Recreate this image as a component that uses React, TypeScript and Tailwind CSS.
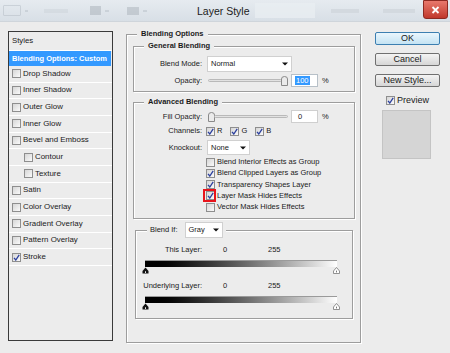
import React from "react"

// Photoshop "Layer Style" dialog

function Check({ checked = false }: { checked?: boolean }) {
  return (
    <span className="w-[9px] h-[9px] shrink-0 border border-[#8e8e8e] bg-linear-to-br from-[#d6d6d6] to-[#fafafa] flex items-center justify-center">
      {checked && (
        <svg width="7" height="7" viewBox="0 0 7 7">
          <path d="M1 3.8 L2.8 6 L6.2 0.8" stroke="#2b3f9e" strokeWidth="1.3" fill="none" />
        </svg>
      )}
    </span>
  )
}

function Arrow() {
  return (
    <svg width="6" height="4" viewBox="0 0 6 4">
      <path d="M0 0.5 H6 L3 3.5Z" fill="#111" />
    </svg>
  )
}

function Thumb() {
  return (
    <svg width="7" height="10" viewBox="0 0 7 10" className="shrink-0">
      <path d="M0.5 3 Q0.5 0.5 3.5 0.5 Q6.5 0.5 6.5 3 V9.5 H0.5Z" fill="#ebebeb" stroke="#8a8a8a" />
    </svg>
  )
}

function Track() {
  return <div className="flex-1 h-[3px] rounded-full border border-[#b9b9b9] bg-[#e2e2e2]" />
}

function Select({ value, w }: { value: string; w: string }) {
  return (
    <div className={`${w} h-full bg-white border border-[#d0d0d0] flex items-center justify-between pl-[3px] pr-[3px]`}>
      <span>{value}</span>
      <Arrow />
    </div>
  )
}

function BlackTri() {
  return (
    <svg width="7" height="7" viewBox="0 0 7 7">
      <path d="M3.5 0.5 L6.5 4 V6.5 H0.5 V4Z" fill="#111" />
      <rect x="3" y="4.3" width="1" height="1.6" fill="#fff" />
    </svg>
  )
}

function WhiteTri() {
  return (
    <svg width="7" height="7" viewBox="0 0 7 7">
      <path d="M3.5 0.5 L6.5 4 V6.5 H0.5 V4Z" fill="#fff" stroke="#777" strokeWidth="0.8" />
      <rect x="3" y="3.6" width="1" height="1.8" fill="#777" />
    </svg>
  )
}

const styleRows: { label: string; indent?: boolean; checked?: boolean }[] = [
  { label: "Drop Shadow" },
  { label: "Inner Shadow" },
  { label: "Outer Glow" },
  { label: "Inner Glow" },
  { label: "Bevel and Emboss" },
  { label: "Contour", indent: true },
  { label: "Texture", indent: true },
  { label: "Satin" },
  { label: "Color Overlay" },
  { label: "Gradient Overlay" },
  { label: "Pattern Overlay" },
  { label: "Stroke", checked: true },
]

function StylesPanel() {
  return (
    <div className="w-[105px] h-[310px] border border-[#3a3a3a] bg-[#ececec] flex flex-col">
      <div className="h-[19px] pl-[3px] flex items-center border-b border-white text-[7.8px]">Styles</div>
      <div className="h-[15px] mr-[1px] bg-[#3399ff] text-white font-bold pl-[3px] flex items-center">
        Blending Options: Custom
      </div>
      {styleRows.map((r) => (
        <div
          key={r.label}
          className={`h-[16.67px] shrink-0 border-b border-white flex items-center gap-[2px] text-[7.9px] ${r.indent ? "pl-[15px]" : "pl-[3px]"}`}
        >
          <Check checked={r.checked} />
          <span>{r.label}</span>
        </div>
      ))}
    </div>
  )
}

const boxCls = "border border-[#9d9d9d] shadow-[1px_1px_0_#ffffff,inset_1px_1px_0_#ffffff]"

function Legend({ children }: { children: React.ReactNode }) {
  return <div className="-mt-[6px] ml-[10px] px-[4px] w-fit bg-[#ececec] font-bold leading-[10px]">{children}</div>
}

const advChecks = [
  { label: "Blend Interior Effects as Group", checked: false },
  { label: "Blend Clipped Layers as Group", checked: true },
  { label: "Transparency Shapes Layer", checked: true },
  { label: "Layer Mask Hides Effects", checked: true, mark: true },
  { label: "Vector Mask Hides Effects", checked: false },
]

function BlendingOptions() {
  return (
    <div className={`mt-[3px] ml-[13px] w-[235px] h-[309px] ${boxCls}`}>
      <Legend>Blending Options</Legend>

      {/* General Blending */}
      <div className={`mt-[7px] ml-[6px] mr-[5px] pb-[4px] ${boxCls}`}>
        <Legend>General Blending</Legend>
        <div className="mt-[5px] h-[16px] flex items-center">
          <span className="w-[68px] text-right">Blend Mode:</span>
          <div className="ml-[5px] h-full">
            <Select value="Normal" w="w-[85px]" />
          </div>
        </div>
        <div className="mt-[2px] h-[13px] flex items-center">
          <span className="w-[68px] text-right">Opacity:</span>
          <div className="ml-[6px] w-[80px] flex items-center">
            <Track />
            <div className="-ml-[1px]">
              <Thumb />
            </div>
          </div>
          <div className="ml-[3px] w-[27px] h-full bg-white border border-[#b7c0c8] flex items-center pl-[3px]">
            <span className="bg-[#3399ff] text-white px-[1px] leading-[9px]">100</span>
          </div>
          <span className="ml-[4px]">%</span>
        </div>
      </div>

      {/* Advanced Blending */}
      <div className={`mt-[10px] ml-[6px] mr-[5px] h-[117px] ${boxCls}`}>
        <Legend>Advanced Blending</Legend>
        <div className="mt-[3px] h-[13px] flex items-center">
          <span className="w-[68px] text-right">Fill Opacity:</span>
          <div className="ml-[6px] w-[80px] flex items-center">
            <Thumb />
            <div className="-ml-[1px] flex-1 flex">
              <Track />
            </div>
          </div>
          <div className="ml-[3px] w-[27px] h-full bg-white border border-[#cfcfcf] flex items-center pl-[6px]">0</div>
          <span className="ml-[4px]">%</span>
        </div>
        <div className="mt-[3px] h-[10px] flex items-center">
          <span className="w-[68px] text-right">Channels:</span>
          <div className="ml-[4px] flex items-center gap-[8px]">
            {["R", "G", "B"].map((c) => (
              <span key={c} className="flex items-center gap-[2px]">
                <Check checked />
                <span>{c}</span>
              </span>
            ))}
          </div>
        </div>
        <div className="mt-[4px] h-[15px] flex items-center">
          <span className="w-[68px] text-right">Knockout:</span>
          <div className="ml-[5px] h-full">
            <Select value="None" w="w-[43px]" />
          </div>
        </div>
        <div className="mt-[1.5px] ml-[72px] flex flex-col">
          {advChecks.map((c) => (
            <div key={c.label} className="h-[11.25px] flex items-center gap-[2px]">
              <span className="relative flex">
                <Check checked={c.checked} />
                {c.mark && <span className="absolute -left-[3px] -top-[2px] w-[13px] h-[13px] border-2 border-[#e8141b]" />}
              </span>
              <span>{c.label}</span>
            </div>
          ))}
        </div>
      </div>

      {/* Blend If */}
      <div className={`mt-[11px] ml-[8px] mr-[7px] h-[89px] ${boxCls}`}>
        <div className="-mt-[9px] ml-[11px] px-[3px] w-fit h-[16px] bg-[#ececec] flex items-center gap-[7px]">
          <span>Blend If:</span>
          <div className="h-full">
            <Select value="Gray" w="w-[38px]" />
          </div>
        </div>
        <div className="mt-[7px] h-[10px] flex items-center">
          <span className="w-[66px] text-right">This Layer:</span>
          <span className="ml-[21px] w-[45px]">0</span>
          <span>255</span>
        </div>
        <div className="mt-[5px] ml-[9px] w-[192px] h-[7px] border-t border-[#9a9a9a] bg-linear-to-r from-black to-white" />
        <div className="ml-[6px] w-[198px] flex justify-between">
          <BlackTri />
          <WhiteTri />
        </div>
        <div className="mt-[7px] h-[10px] flex items-center">
          <span className="w-[66px] text-right">Underlying Layer:</span>
          <span className="ml-[21px] w-[45px]">0</span>
          <span>255</span>
        </div>
        <div className="mt-[5px] ml-[9px] w-[192px] h-[7px] border-t border-[#9a9a9a] bg-linear-to-r from-black to-white" />
        <div className="ml-[6px] w-[198px] flex justify-between">
          <BlackTri />
          <WhiteTri />
        </div>
      </div>
    </div>
  )
}

function Button({ children, primary = false }: { children: React.ReactNode; primary?: boolean }) {
  return (
    <div
      className={`h-[13px] w-full rounded-[2px] border flex items-center justify-center text-[9px] leading-none ${
        primary
          ? "border-[#3c7fb1] bg-linear-to-b from-[#eaf6fd] to-[#c4e3f3]"
          : "border-[#707070] bg-linear-to-b from-[#f4f4f4] to-[#d6d6d6]"
      }`}
    >
      {children}
    </div>
  )
}

function RightColumn() {
  return (
    <div className="mt-[1px] ml-[14px] w-[65px] flex flex-col">
      <Button primary>OK</Button>
      <div className="mt-[8px]">
        <Button>Cancel</Button>
      </div>
      <div className="mt-[8px]">
        <Button>New Style...</Button>
      </div>
      <div className="mt-[8px] ml-[11px] h-[10px] flex items-center gap-[2px] text-[9px]">
        <Check checked />
        <span>Preview</span>
      </div>
      <div className="mt-[5px] ml-[7px] w-[49px] h-[49px] bg-[#d5d5d5] border border-[#c4c4c4]" />
    </div>
  )
}

function TitleBar() {
  return (
    <div className="h-[22px] flex items-center bg-linear-to-b from-[#e6ebf0] to-[#d8dfe6] border-b border-[#cfd5db]">
      <div className="w-[197px] h-full flex items-center pl-[3px] gap-[4px] opacity-50">
        <div className="w-[18px] h-[11px] border border-[#b4bcc4] rounded-[1px]" />
        <div className="w-[3px] h-[2px] bg-[#b8c0c8]" />
        <div className="ml-[12px] w-[24px] h-[4px] bg-[#cdd4da]" />
        <div className="ml-[18px] w-[11px] h-[9px] bg-[#a8b0b8]" />
        <div className="w-[4px] h-[2px] bg-[#b8c0c8]" />
        <div className="ml-[14px] w-[12px] h-[8px] bg-[#aab2ba]" />
        <div className="w-[4px] h-[2px] bg-[#b8c0c8]" />
      </div>
      <span className="text-[10.5px] text-[#1b1b1b]">Layer Style</span>
      <div className="flex-1 h-full flex items-center pl-[5px] gap-[16px]">
        <div className="w-[60px] h-[15px] bg-[#e9edf1] opacity-80" />
        <div className="w-[28px] h-[4px] bg-[#d3d9df]" />
        <div className="ml-[8px] w-[32px] h-[4px] bg-[#d3d9df]" />
      </div>
      <div className="self-start mr-[2px] w-[25px] h-[19px] rounded-b-[3px] border border-[#8c2a22] bg-linear-to-b from-[#e8786c] to-[#c0372b] flex items-center justify-center">
        <svg width="9" height="8" viewBox="0 0 9 8">
          <path d="M1.5 1 L7.5 7 M7.5 1 L1.5 7" stroke="#fff" strokeWidth="1.8" />
        </svg>
      </div>
    </div>
  )
}

export default function App() {
  return (
    <div className="w-[450px] h-[353px] overflow-hidden bg-[#ececec] font-['Liberation_Sans',Arial,sans-serif] text-[7.5px] leading-[10px] text-[#1a1a1a] flex flex-col">
      <TitleBar />
      <div className="pt-[9px] pl-[8px] flex items-start">
        <StylesPanel />
        <BlendingOptions />
        <RightColumn />
      </div>
    </div>
  )
}
